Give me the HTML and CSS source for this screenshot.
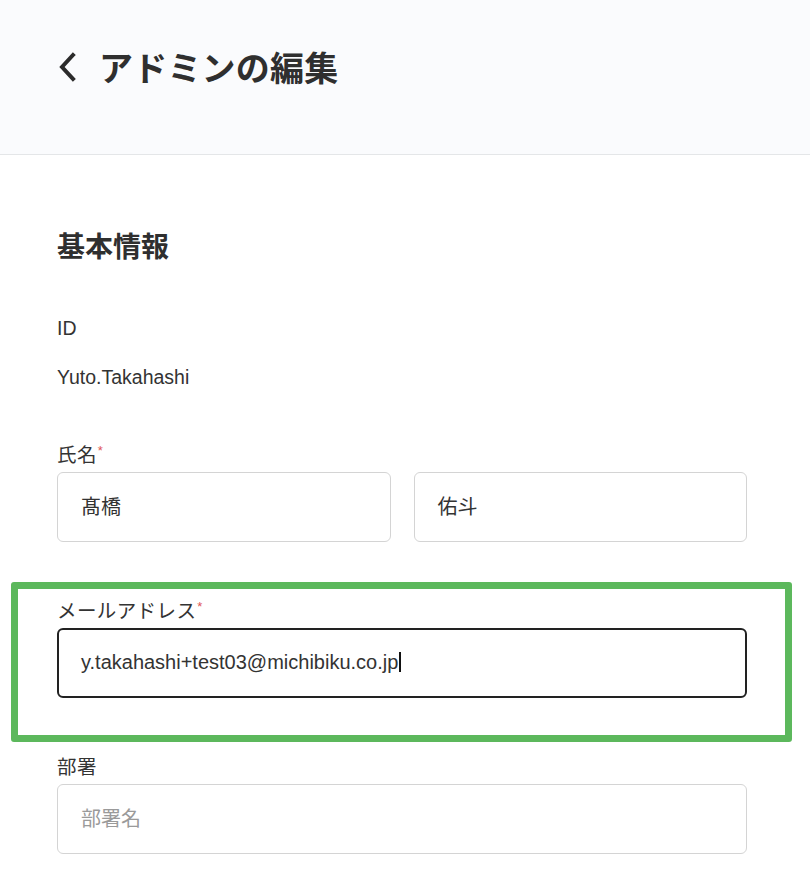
FILE: index.html
```html
<!DOCTYPE html>
<html lang="ja">
<head>
<meta charset="utf-8">
<title>アドミンの編集</title>
<link rel="stylesheet" href="styles.css">
</head>
<body>
<header class="page-header">
  <svg class="back-icon" width="22" height="30" viewBox="0 0 22 30" aria-hidden="true">
    <path d="M16 3 L5 15 L16 27" fill="none" stroke="#2b2b2b" stroke-width="4" stroke-linecap="square" stroke-linejoin="miter"/>
  </svg>
  <h1 class="page-title">アドミンの編集</h1>
</header>
<main class="content">
  <h2 class="section-title">基本情報</h2>
  <div class="info">
    <div class="info-label">ID</div>
    <div class="info-value">Yuto.Takahashi</div>
  </div>
  <div class="field">
    <div class="label">氏名<span class="req">*</span></div>
    <div class="row">
      <div class="input">髙橋</div>
      <div class="input">佑斗</div>
    </div>
  </div>
  <div class="field highlight-wrap">
    <div class="highlight"></div>
    <div class="label">メールアドレス<span class="req">*</span></div>
    <div class="input focused">y.takahashi+test03@michibiku.co.jp<span class="caret"></span></div>
  </div>
  <div class="field">
    <div class="label">部署</div>
    <div class="input placeholder">部署名</div>
  </div>
</main>
</body>
</html>
```
FILE: styles.css
```css
* { box-sizing: border-box; }
html, body { margin: 0; padding: 0; background: #fff; }
body {
  font-family: "Liberation Sans", Arial, "Noto Sans CJK JP", sans-serif;
  color: #333;
  width: 810px;
  height: 884px;
  overflow: hidden;
}
.page-header {
  height: 155px;
  background: #fafbfd;
  border-bottom: 1px solid #e4e6e8;
  display: flex;
  align-items: center;
  padding-left: 57px;
  padding-bottom: 20px;
}
.back-icon { display: block; margin-right: 20px; }
.page-title {
  margin: 0;
  font-family: "Noto Sans CJK JP", sans-serif;
  font-weight: 700;
  font-size: 34px;
  line-height: 40px;
  color: #2f2f2f;
  letter-spacing: 0.2px;
}
.content {
  padding: 70px 63px 0 57px;
}
.section-title {
  margin: 0 0 49px;
  font-family: "Noto Sans CJK JP", sans-serif;
  font-weight: 700;
  font-size: 28px;
  line-height: 40px;
  color: #2f2f2f;
}
.info-label, .info-value {
  font-size: 19.5px;
  line-height: 28px;
}
.info-label { margin-bottom: 21px; }
.info { margin-bottom: 50px; }
.field { margin-bottom: 55px; position: relative; }
.label {
  font-size: 19.5px;
  line-height: 28px;
  margin-bottom: 3px;
  font-family: "Liberation Sans", "Noto Sans CJK JP", sans-serif;
  letter-spacing: 0.4px;
}
.req { color: #e05555; font-size: 13px; vertical-align: top; line-height: 20px; margin-left: 1px; }
.row { display: flex; gap: 23px; }
.row .input { flex: 1; }
.input {
  height: 70px;
  border: 1.5px solid #d4d4d4;
  border-radius: 6px;
  padding-left: 23px;
  padding-bottom: 3px;
  display: flex;
  align-items: center;
  font-size: 20px;
  color: #333;
  background: #fff;
}
.input.focused { border: 2px solid #222; padding-left: 22px; padding-bottom: 2px; }
.input.placeholder { color: #9a9a9a; }
.caret {
  display: inline-block;
  width: 1.5px;
  height: 20px;
  background: #111;
  margin-left: 1px;
}
.highlight {
  position: absolute;
  left: -46px;
  top: -15px;
  width: 781px;
  height: 160px;
  border: 7px solid #5cb85c;
  border-radius: 3px;
  pointer-events: none;
}
```
